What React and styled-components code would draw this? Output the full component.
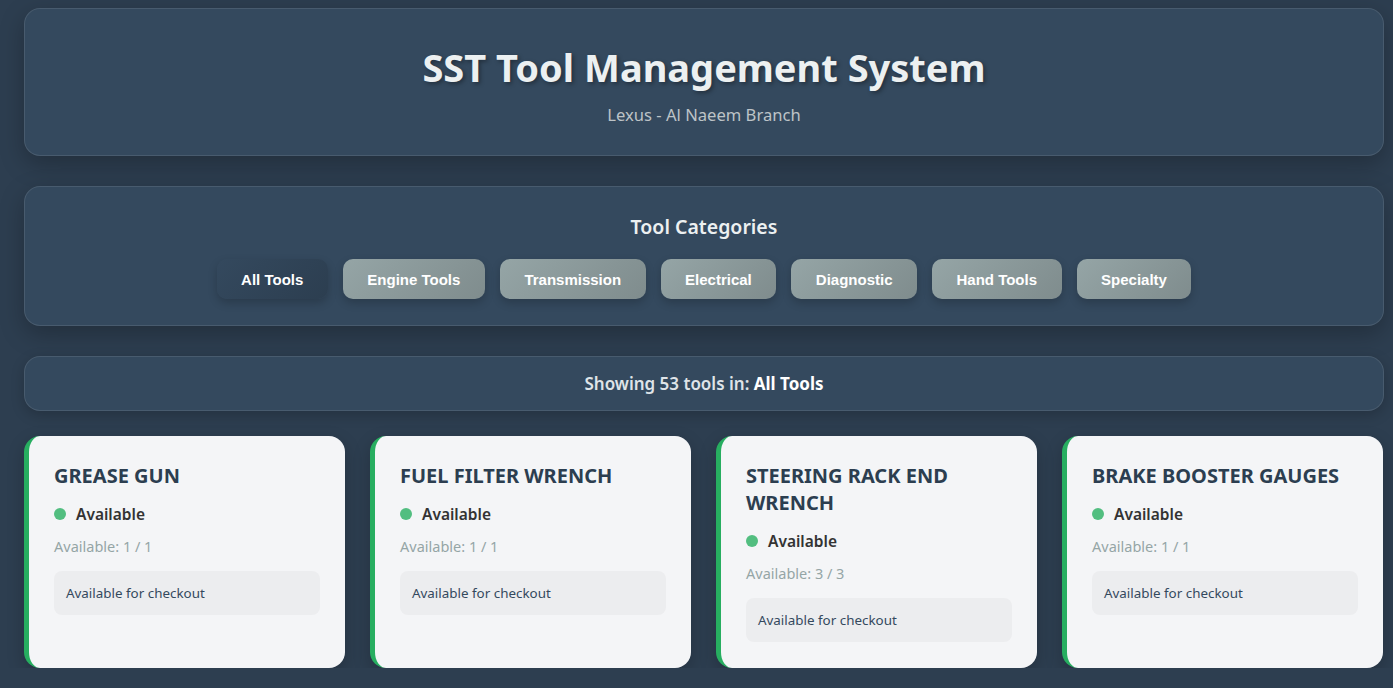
import React from "react"
import styled, { createGlobalStyle } from "styled-components"

const GlobalStyle = createGlobalStyle`
  html, body {
    margin: 0;
    background: #2d3e50;
  }
  body {
    padding: 8px 9px 0 24px;
    font-family: "Noto Sans", "Open Sans", sans-serif;
    overflow: hidden;
  }
`

const Page = styled.div`
  display: flex;
  flex-direction: column;
  gap: 30px;
`

const Panel = styled.section`
  background: #34495e;
  border: 1px solid rgba(255, 255, 255, 0.1);
  border-radius: 16px;
  box-shadow: 0 8px 24px rgba(0, 0, 0, 0.25);
  text-align: center;
  color: #ecf0f1;
`

const Header = styled(Panel)`
  padding: 34px 20px 29px;
`

const Title = styled.h1`
  margin: 0;
  font-size: 38px;
  font-weight: 700;
  line-height: 48px;
  color: #ecf0f1;
  text-shadow: 2px 2px 4px rgba(0, 0, 0, 0.35);
`

const Subtitle = styled.p`
  margin: 13px 0 0;
  font-size: 16.6px;
  line-height: 22px;
  color: #bdc3c7;
`

const Categories = styled(Panel)`
  padding: 27px 20px 26px;
`

const SectionTitle = styled.h2`
  margin: 0 0 19px;
  font-size: 19.5px;
  font-weight: 600;
  line-height: 26px;
  color: #ecf0f1;
`

const ButtonRow = styled.div`
  display: flex;
  justify-content: center;
  gap: 15px;
`

const CatButton = styled.button`
  height: 40px;
  padding: 0 24.5px;
  border: none;
  border-radius: 10px;
  font-family: "Liberation Sans", Arial, sans-serif;
  font-size: 15px;
  font-weight: 700;
  color: #ffffff;
  background: ${p =>
    p.$active
      ? "linear-gradient(135deg, #34495e, #2c3e50)"
      : "linear-gradient(135deg, #95a5a6, #7f8c8d)"};
  box-shadow: 0 4px 10px rgba(0, 0, 0, 0.2);
  cursor: pointer;
`

const Summary = styled(Panel)`
  padding: 15px 20px 14px;
  font-size: 17px;
  line-height: 24px;
  font-weight: 600;
  color: #dfe4e8;
  box-shadow: 0 4px 14px rgba(0, 0, 0, 0.2);

  strong {
    font-weight: 700;
    color: #ffffff;
  }
`

const Grid = styled.div`
  display: grid;
  grid-template-columns: repeat(4, 321px);
  gap: 25px;
  margin-top: -5px;
`

const Card = styled.article`
  background: #f4f5f7;
  border-left: 5px solid #27ae60;
  border-radius: 16px;
  padding: 26px 25px 26px;
  box-shadow: 0 6px 18px rgba(0, 0, 0, 0.2);
`

const CardTitle = styled.h3`
  margin: 0 0 14px;
  font-size: 20px;
  font-weight: 700;
  line-height: 27px;
  text-transform: uppercase;
  color: #2c3e50;
`

const Status = styled.div`
  display: flex;
  align-items: center;
  gap: 10px;
  font-size: 15.5px;
  font-weight: 600;
  color: #333333;
  line-height: 22px;
`

const Dot = styled.span`
  width: 12px;
  height: 12px;
  border-radius: 50%;
  background: ${p => p.$color};
`

const Count = styled.div`
  margin-top: 11px;
  font-size: 14.5px;
  line-height: 20px;
  color: #95a5a6;
`

const Note = styled.div`
  margin-top: 15px;
  padding: 12px 12px;
  background: #ecedef;
  border-radius: 8px;
  font-size: 13.4px;
  line-height: 20px;
  color: #34495e;
`

const categories = [
  "All Tools",
  "Engine Tools",
  "Transmission",
  "Electrical",
  "Diagnostic",
  "Hand Tools",
  "Specialty",
]

const tools = [
  { name: "Grease Gun", available: 1, total: 1 },
  { name: "Fuel Filter Wrench", available: 1, total: 1 },
  { name: "Steering Rack End Wrench", available: 3, total: 3 },
  { name: "Brake Booster Gauges", available: 1, total: 1 },
]

const App = () => (
  <>
    <GlobalStyle />
    <Page>
      <Header>
        <Title>SST Tool Management System</Title>
        <Subtitle>Lexus - Al Naeem Branch</Subtitle>
      </Header>

      <Categories>
        <SectionTitle>Tool Categories</SectionTitle>
        <ButtonRow>
          {categories.map((c, i) => (
            <CatButton key={c} $active={i === 0}>{c}</CatButton>
          ))}
        </ButtonRow>
      </Categories>

      <Summary>
        Showing 53 tools in: <strong>All Tools</strong>
      </Summary>

      <Grid>
        {tools.map(t => (
          <Card key={t.name}>
            <CardTitle>{t.name}</CardTitle>
            <Status>
              <Dot $color="#52be80" />
              Available
            </Status>
            <Count>Available: {t.available} / {t.total}</Count>
            <Note>Available for checkout</Note>
          </Card>
        ))}
      </Grid>
    </Page>
  </>
)

export default App
